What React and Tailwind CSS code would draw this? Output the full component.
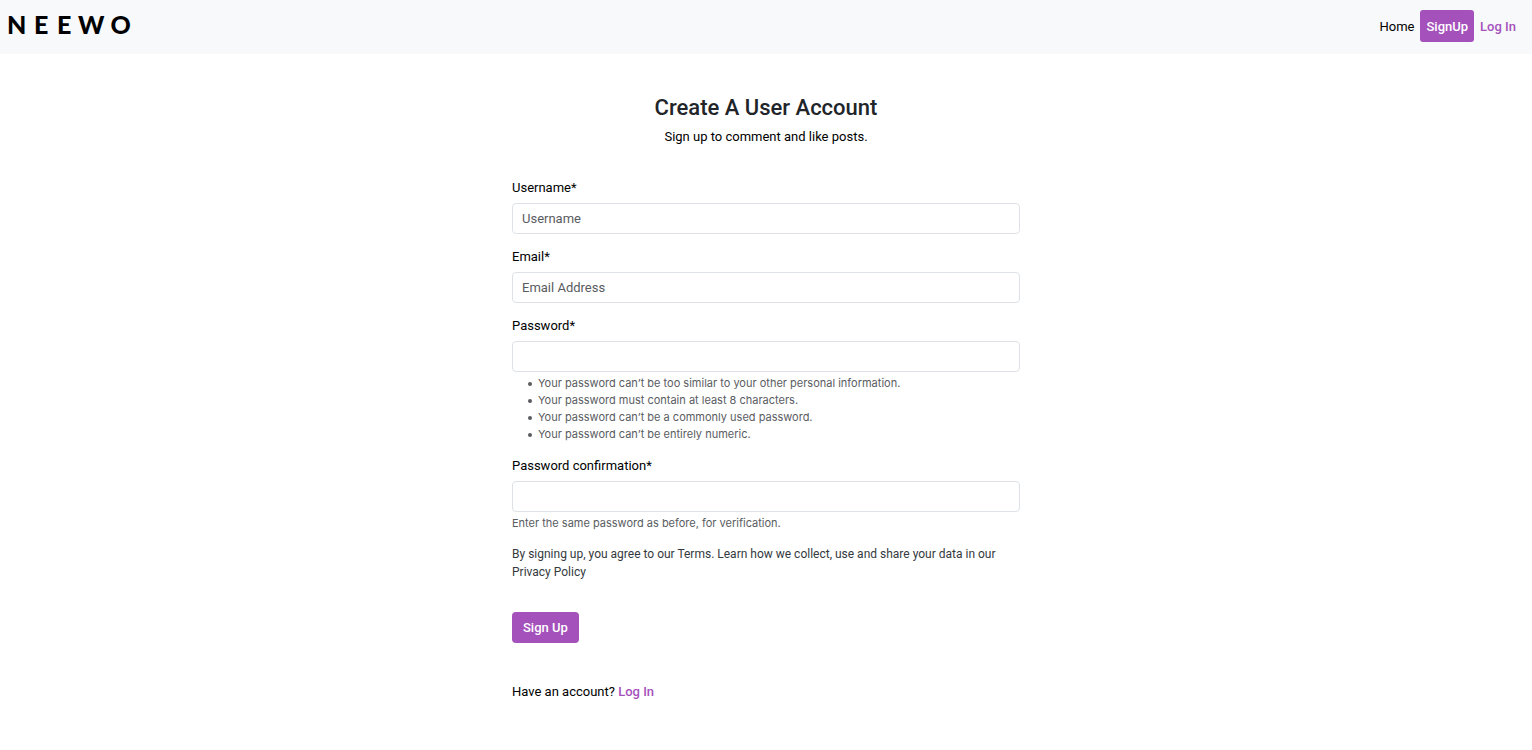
import React from "react";

const inputClass =
  "block h-[31px] w-full rounded border border-[#dee2e6] bg-white px-[9px] text-[13px] text-[#212529] placeholder:text-[#595c5f] placeholder:opacity-100 focus:border-[#a551bc] focus:outline-none";

const passwordRules = [
  "Your password can’t be too similar to your other personal information.",
  "Your password must contain at least 8 characters.",
  "Your password can’t be a commonly used password.",
  "Your password can’t be entirely numeric.",
];

function Field({ id, label, type = "text", placeholder, children }) {
  return (
    <div className="mb-[13px]">
      <label htmlFor={id} className="mb-[5px] block">
        {label}*
      </label>
      <input id={id} name={id} type={type} placeholder={placeholder} className={inputClass} />
      {children}
    </div>
  );
}

function Logo() {
  return (
    <a href="#home" aria-label="Neewo" className="block">
      <svg viewBox="0 0 140 34" className="block h-[34px] w-[140px]">
        <text x="7 34 57 78 110.5" y="24" className="fill-black font-['Lato',sans-serif] text-[25px] font-black">
          NEEWO
        </text>
      </svg>
    </a>
  );
}

export default function App() {
  return (
    <div className="bg-white font-['Roboto',sans-serif] text-[13px] leading-5 text-[#212529]">
      <header className="flex h-[54px] items-start justify-between bg-[#f8f9fa] pt-[10px] pr-[10px]">
        <Logo />
        <nav className="flex items-center text-black">
          <a href="#home" className="px-[6px] pt-[7px] pb-[5px]">Home</a>
          <a href="#signup" className="rounded-[3px] bg-[#a551bc] px-[6px] pt-[7px] pb-[5px] font-medium text-white">SignUp</a>
          <a href="#login" className="px-[6px] pt-[7px] pb-[5px] font-medium text-[#a551bc]">Log In</a>
        </nav>
      </header>
      <main className="mx-auto max-w-[508px] pt-[41px]">
        <div className="mb-[31px] text-center">
          <h1 className="mb-[6px] text-[22px] leading-[26px] font-medium">Create A User Account</h1>
          <p className="text-black">Sign up to comment and like posts.</p>
        </div>
        <form className="text-black" onSubmit={(e) => e.preventDefault()}>
          <Field id="username" label="Username" placeholder="Username" />
          <Field id="email" label="Email" type="email" placeholder="Email Address" />
          <Field id="password1" label="Password" type="password">
            <ul className="mt-[3px] pl-4 font-['Inter',sans-serif] text-[11px] leading-[17px] text-[#595c5f]">
              {passwordRules.map((rule) => (
                <li
                  key={rule}
                  className="flex items-center gap-[6px] before:size-1 before:rounded-full before:bg-[#595c5f] before:content-['']"
                >
                  {rule}
                </li>
              ))}
            </ul>
          </Field>
          <Field id="password2" label="Password confirmation" type="password">
            <p className="mt-[3px] font-['Inter',sans-serif] text-[11px] leading-[17px] text-[#595c5f]">
              Enter the same password as before, for verification.
            </p>
          </Field>
          <p className="mb-[31px] text-[12px] leading-[18px] text-[#343a40]">
            By signing up, you agree to our Terms. Learn how we collect, use and share your data in our Privacy Policy
          </p>
          <button type="submit" className="rounded bg-[#a551bc] px-[11px] pt-[6px] pb-[5px] font-medium text-white">
            Sign Up
          </button>
        </form>
        <p className="mt-[39px] pb-10 text-black">
          Have an account?{" "}
          <a href="#login" className="font-medium text-[#a551bc]">Log In</a>
        </p>
      </main>
    </div>
  );
}
